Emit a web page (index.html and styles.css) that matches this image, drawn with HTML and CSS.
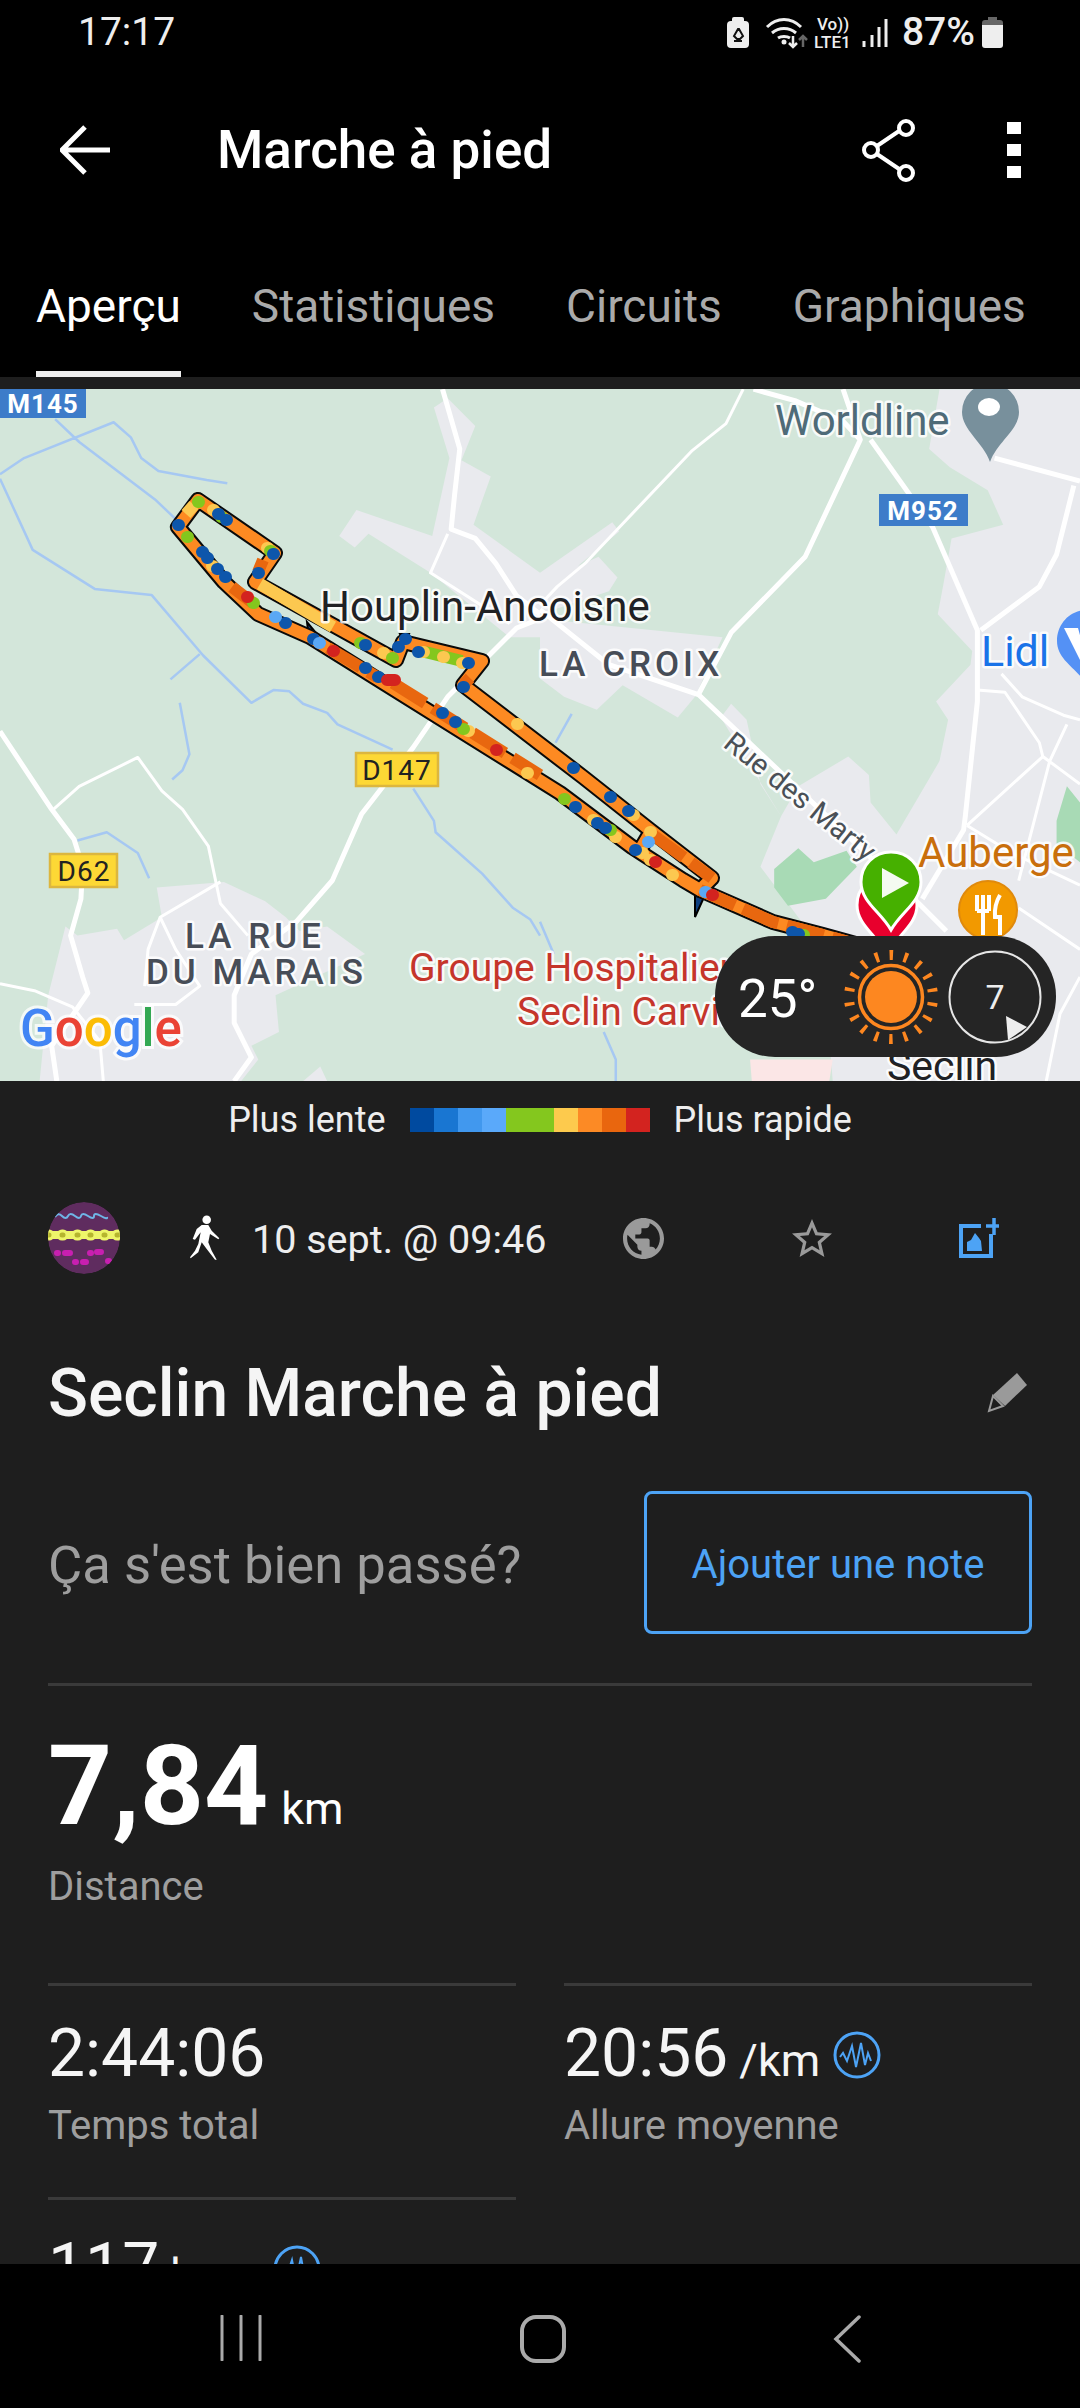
FILE: index.html
```html
<!DOCTYPE html>
<html lang="fr">
<head>
    <meta charset="UTF-8">
    <meta name="viewport" content="width=device-width, initial-scale=1.0">
    <title>Marche à pied</title>
    <link rel="stylesheet" href="styles.css">
</head>
<body>
<div class="screen">

    <div class="status-bar">
        <span class="clock">17:17</span>
        <div class="status-right">
            <svg class="status-icons" viewBox="726 14 166 36">
                <rect x="728" y="21" width="22" height="27" rx="4" fill="#eee"/>
                <rect x="733" y="17" width="12" height="6" rx="2" fill="#eee"/>
                <path d="M739 29l-4 7 3 3h3l3-3-4-7zM735 41h8" fill="none" stroke="#111" stroke-width="2"/>
                <path d="M768 27c10-10 24-10 34 0M773 33c7-6 17-6 24 0M779 38c3-2 9-2 12 0" fill="none" stroke="#eee" stroke-width="3"/>
                <circle cx="785" cy="42" r="2.5" fill="#eee"/>
                <path d="M794 36v11M790 43l4 4 4-4" fill="none" stroke="#eee" stroke-width="2.5"/>
                <path d="M804 47V37M800 40l4-4 4 4" fill="none" stroke="#666" stroke-width="2.5"/>
                <text class="tiny" x="818" y="30">Vo))</text>
                <text class="tiny" x="815" y="48">LTE1</text>
                <path d="M865 41v6M873 35v12M880 27v20M887 19v28" fill="none" stroke="#eee" stroke-width="3"/>
            </svg>
            <span class="percent">87%</span>
            <svg class="battery" viewBox="0 0 21 31">
                <path d="M6 0h9v3h3q3 0 3 3v2H0V6q0-3 3-3h3z" fill="#666"/>
                <path d="M0 8h21v20q0 3-3 3H3q-3 0-3-3z" fill="#eee"/>
            </svg>
        </div>
    </div>

    <div class="app-bar">
        <svg class="back" viewBox="60 125 52 50"><path d="M110 150H64M85 127l-23 23 23 23" fill="none" stroke="#fff" stroke-width="5"/></svg>
        <span class="app-title">Marche à pied</span>
        <svg class="share" viewBox="860 118 56 63">
            <path d="M871 149l34-23M871 149l34 23" stroke="#fff" stroke-width="4"/>
            <circle cx="906" cy="127" r="7" fill="#000" stroke="#fff" stroke-width="4"/>
            <circle cx="871" cy="149" r="7" fill="#000" stroke="#fff" stroke-width="4"/>
            <circle cx="906" cy="172" r="7" fill="#000" stroke="#fff" stroke-width="4"/>
        </svg>
        <div class="more"><i></i><i></i><i></i></div>
    </div>

    <div class="tabs">
        <span class="tab active">Aperçu</span>
        <span class="tab">Statistiques</span>
        <span class="tab">Circuits</span>
        <span class="tab">Graphiques</span>
    </div>

    <div class="map">
        <svg class="map-art" viewBox="0 389 1080 692">
            <!-- left half, points read off the zoomed crop -->
            <g transform="translate(0 380) scale(.34439 .45918)">
                <path class="town" d="M985 340L1035 283 1255 340 1305 170 1260 60 1300 40 1380 100 1340 175 1425 210 1375 315 1568 420V560H1480L1250 420 1070 335 1030 365z"/>
                <path class="town" d="M455 1105L650 1093 770 1135 830 1170 870 1200 950 1190 1060 1250 800 1340 810 1420 730 1450 750 1480 700 1527H115L140 1340 190 1190 225 1210 340 1195 360 1220 470 1170z"/>
                <path class="town" d="M880 1527L930 1495 950 1527z"/>
                <path class="road" d="M0 765L150 935 215 1000 240 1060 235 1130 205 1210 240 1300 255 1335 205 1390 150 1450 165 1527"/>
                <path class="road" d="M1568 520L1500 540 1300 690 1200 800 1050 945 965 1090 860 1180 730 1250 680 1340 680 1400 730 1475 680 1527"/>
                <path class="road" d="M1285 20L1335 150 1320 250 1310 325 1380 345 1440 400 1500 470 1568 510"/>
                <path class="road thin" d="M155 935L230 885 400 822 470 895 530 935 605 1015 640 1140 720 1210"/>
                <path class="road thin" d="M640 1093L465 1170 510 1240 580 1320 510 1360 390 1360M1300 335L1250 420 1480 530M0 1315L100 1330 210 1365 290 1440 300 1527M465 1170L430 1240 420 1320"/>
                <path class="water" d="M160 85L230 135 450 260 520 310M0 205L70 170 330 92 380 125 410 170 460 198 600 218 660 225M0 215L95 370 275 455 440 468 590 600 730 703 795 675 840 678 880 705 950 725 980 750 1140 805M495 652L580 597M522 703L550 815 530 850 500 870M225 1003L310 985 400 1030 433 1085M1200 890L1260 960 1265 985 1400 1075 1490 1150 1540 1175 1568 1210"/>
            </g>
            <!-- right half -->
            <g transform="translate(540 380) scale(.34439 .45918)">
                <path class="town" d="M1160 20L1130 150 1190 190 1300 240 1345 315 1195 345 1170 450 1155 510 1255 590 1250 620 1150 700 1185 740 1160 830 1035 990 960 920 955 860 895 820 750 885 700 950 640 880 600 740 555 705 525 735 700 950 640 1060 820 1240 850 1527H1568V20z"/>
                <path class="town" d="M0 510L200 460 225 430 170 385 110 405 230 330 210 310 0 420zM0 520L530 560 450 690 400 735 240 665 165 718 70 690 0 650z"/>
                <path class="hospital" d="M610 1480H850L840 1527H615z"/>
                <path class="park" d="M680 1065L750 1020 795 1050 890 1025 920 1060 830 1130 720 1145 680 1105zM1500 960L1530 885 1568 920V1050L1500 1010z"/>
                <path class="road thin" d="M590 20L540 95 440 155 130 400 50 450 0 490"/>
                <path class="road" d="M620 20L740 45 880 90 930 130 770 385 555 550 460 685M880 20L930 130"/>
                <path class="road" d="M960 130L1140 320 1270 545 1270 700 1235 950 1230 980 1110 1130"/>
                <path class="road" d="M1320 170L1568 220M1550 230L1500 380 1450 450 1280 545"/>
                <path class="road" d="M0 500L200 620 460 685 960 1040 1100 1140 1180 1200"/>
                <path class="road thin" d="M1340 640L1400 690 1520 730 1568 740M1270 675L1350 680 1450 790 1460 820 1240 970M1530 750L1480 830 1390 1090M1460 820L1568 880M1240 970L1370 1030 1568 1100M1390 1150L1568 1240M1470 1527L1510 1380 1568 1300"/>
                <path class="water" d="M92 727L45 790M0 1180L40 1250M185 1420L220 1480 220 1527"/>
            </g>

            <!-- route, in page coordinates -->
            <path class="arrow" d="M307 622l2 16 12 1zM400 634h9l-4 11zM695 895v22l10-22z"/>
            <path class="route-edge" d="M178 527L198 500 275 553 255 582 396 660 403 642 482 661 463 685 583 777 650 830 712 878 700 890 683 880 632 847 560 793 310 637 258 614 224 582zM650 833L640 850M700 890L773 922 823 935 870 948"/>
            <path class="route-line" d="M178 527L198 500 275 553 255 582 396 660 403 642 482 661 463 685 583 777 650 830 712 878 700 890 683 880 632 847 560 793 310 637 258 614 224 582z"/>
            <path class="route-line" d="M650 833L640 850M700 890L773 922 823 935 870 948"/>
            <path class="route-dark" d="M263 560L258 572M232 587L253 603M328 648L377 677M393 683L540 775M470 678L463 685M653 835L712 878M700 890L773 922 823 935 870 948"/>
            <path class="route-yellow" d="M260 584L333 627M186 514L194 505"/>
            <path class="route-green" d="M425 652L462 661"/>
            <path class="dot yellow" d="M213 510h1M267 548h1M383 653h1M423 652h1M443 657h1M462 663h1M517 724h1M468 731h1M527 773h1M593 820h1M615 837h1M633 815h1M650 832h1M642 853h1M650 860h1M672 875h1M212 566h1"/>
            <path class="dot green" d="M198 502h1M221 517h1M270 551h1M187 537h1M253 603h1M360 643h1M392 658h1M463 729h1M564 799h1M610 830h1M803 935h1"/>
            <path class="dot blue" d="M178 525h1M218 514h1M226 520h1M273 554h1M258 573h1M202 552h1M207 558h1M217 569h1M225 577h1M285 623h1M313 639h1M365 645h1M418 652h1M398 647h1M405 639h1M365 668h1M378 677h1M442 713h1M455 722h1M468 663h1M463 687h1M573 768h1M610 797h1M628 811h1M575 807h1M597 823h1M605 828h1M635 850h1M792 932h1M798 934h1"/>
            <path class="dot sky" d="M275 617h1M319 643h1M648 842h1M705 892h1"/>
            <path class="dot red" d="M247 597h1M333 651h1M387 680h8M496 750h1M655 862h1M712 895h1"/>

            <!-- road shields -->
            <rect class="shield-blue" x="0" y="389" width="86" height="29"/>
            <text class="shield-text light" x="43" y="413">M145</text>
            <rect class="shield-blue" x="879" y="494" width="89" height="32"/>
            <text class="shield-text light" x="923" y="520">M952</text>
            <rect class="shield-yellow" x="356" y="753" width="82" height="33"/>
            <text class="shield-text" x="397" y="780">D147</text>
            <rect class="shield-yellow" x="50" y="854" width="67" height="33"/>
            <text class="shield-text" x="84" y="881">D62</text>

            <!-- labels -->
            <text class="label place" x="320" y="621">Houplin-Ancoisne</text>
            <text class="label district" x="539" y="676">LA CROIX</text>
            <text class="label district" x="185" y="948">LA RUE</text>
            <text class="label district" x="146" y="984">DU MARAIS</text>
            <text class="label health" x="409" y="981">Groupe Hospitalier</text>
            <text class="label health" x="517" y="1025">Seclin Carvin</text>
            <text class="label poi" x="775" y="435">Worldline</text>
            <text class="label shop" x="981" y="666">Lidl</text>
            <text class="label food" x="918" y="867">Auberge</text>
            <text class="label town-name" x="887" y="1080">Seclin</text>
            <text class="label street" transform="translate(722 746) rotate(39)">Rue des Marty</text>

            <path d="M962 412a28.500 28.500 0 0 1 57 0c0 18-22 30-29 50-7-20-28-32-28-50z" fill="#78909c"/>
            <ellipse cx="989" cy="407" rx="11" ry="9" fill="#fff"/>
            <path d="M1087 610c-17 0-30 14-30 31 0 20 22 28 30 45 8-17 30-25 30-45 0-17-13-31-30-31z" fill="#5491f5"/>
            <path d="M1064 628h14l5 18v16h8v4h-8" fill="#fff"/>

            <circle cx="988" cy="910" r="29" fill="#f29900" stroke="#e08a0c" stroke-width="2"/>
            <path d="M977 895v16M983 895v16M989 895v16M977 911h12M983 911v24M1000 895q-6 10-5 22h5v18" fill="none" stroke="#fff" stroke-width="4"/>

            <path class="pin pin-red" d="M857 905c0-17 13-30 30-30s30 13 30 30c0 20-20 30-30 50-10-20-30-30-30-50z"/>
            <path class="pin pin-green" d="M861 882c0-17 13-30 30-30s30 13 30 30c0 20-20 30-30 48-10-18-30-28-30-48z"/>
            <path d="M882 868l27 15-27 15z" fill="#f4faf0"/>

            <!-- google mark, letter by letter -->
            <text class="google" x="20" y="1046"><tspan fill="#4285f4">G</tspan><tspan fill="#ea4335">o</tspan><tspan fill="#fbbc05">o</tspan><tspan fill="#4285f4">g</tspan><tspan fill="#34a853">l</tspan><tspan fill="#ea4335">e</tspan></text>
        </svg>

        <div class="weather">
            <span class="temp">25°</span>
            <svg class="sun" viewBox="0 0 96 96">
                <circle class="sun-rays" cx="48" cy="48" r="42"/>
                <circle class="sun-ring" cx="48" cy="48" r="31.500"/>
                <circle class="sun-core" cx="48" cy="48" r="26"/>
            </svg>
            <svg class="wind" viewBox="0 0 94 94">
                <circle cx="47" cy="47" r="45.500" fill="none" stroke="#e6e6e6" stroke-width="2"/>
                <path d="M58 66l21 11-19 13z" fill="#eee"/>
                <text class="wind-speed" x="47" y="59">7</text>
            </svg>
        </div>
    </div>

    <div class="content">
        <div class="legend">
            <span>Plus lente</span>
            <div class="legend-bar">
                <i class="c1"></i><i class="c2"></i><i class="c3"></i><i class="c4"></i><i class="c5"></i><i class="c5"></i><i class="c6"></i><i class="c7"></i><i class="c8"></i><i class="c9"></i>
            </div>
            <span>Plus rapide</span>
        </div>

        <div class="padded">
            <div class="meta">
                <svg class="avatar" viewBox="48 1202 72 72">
                    <clipPath id="egg"><circle cx="84" cy="1238" r="36"/></clipPath>
                    <g clip-path="url(#egg)">
                        <circle cx="84" cy="1238" r="36" fill="#5f2c5f"/>
                        <path d="M55 1217q3-5 7-1t6 0 7 0 6 0 7 0 6 0 7 0 6 1" fill="none" stroke="#6fb5e6" stroke-width="2"/>
                        <rect x="48" y="1231" width="72" height="8" fill="#eef56a"/>
                        <path d="M48 1235h1M62 1235h1M77 1235h1M90 1235h1M104 1235h1M117 1235h1" stroke="#eef56a" stroke-width="11" stroke-linecap="round"/>
                        <path d="M48 1235h1M62 1235h1M77 1235h1M90 1235h1M104 1235h1M117 1235h1" stroke="#b5b52e" stroke-width="5" stroke-linecap="round"/>
                        <path d="M57 1253h1M65 1253h5M90 1253h1M97 1252h4M75 1262h1M83 1262h3M108 1261h1" stroke="#c81fb0" stroke-width="6" stroke-linecap="round"/>
                    </g>
                </svg>
                <svg class="walker" viewBox="188 1216 32 46">
                    <circle cx="206.700" cy="1220.700" r="4.300" fill="#fff"/>
                    <path d="M201.700 1226H208.300L211.700 1231.700 219.300 1239.300 218.300 1240.300 210 1235 208.300 1243.300 211.700 1251.700 216.700 1260.700H215L206.700 1250 201.700 1243.300 198.300 1253.300 190.700 1259.300 190 1258.300 195 1251.700 198.300 1245 200.700 1233.300 195 1240.700 192.700 1240 196.700 1230z" fill="#fff"/>
                </svg>
                <span class="meta-date">10 sept. @ 09:46</span>
                <svg class="globe" viewBox="2 2 20 20"><path d="M12 2C6.480 2 2 6.480 2 12s4.480 10 10 10 10-4.480 10-10S17.520 2 12 2zm-1 17.930c-3.950-.49-7-3.850-7-7.930 0-.62.080-1.210.21-1.790L9 15v1c0 1.100.9 2 2 2v1.930zm6.900-2.540c-.26-.81-1-1.390-1.900-1.390h-1v-3c0-.55-.45-1-1-1H8v-2h2c.55 0 1-.45 1-1V7h2c1.100 0 2-.9 2-2v-.41c2.930 1.190 5 4.060 5 7.410 0 2.080-.8 3.970-2.100 5.390z"/></svg>
                <svg class="star" viewBox="2 2 20 19"><path d="M22 9.240l-7.190-.62L12 2 9.190 8.630 2 9.240l5.460 4.730L5.820 21 12 17.270 18.180 21l-1.630-7.030L22 9.240zM12 15.400l-3.760 2.270 1-4.280-3.320-2.880 4.380-.38L12 6.100l1.710 4.040 4.380.38-3.320 2.880 1 4.280L12 15.400z"/></svg>
                <svg class="add-photo" viewBox="960 1214 44 44">
                    <path d="M984 1224h-20v30h30v-22" fill="none" stroke="#4da3f5" stroke-width="4"/>
                    <path d="M997 1216v17M989 1224h13" fill="none" stroke="#4da3f5" stroke-width="3.500"/>
                    <path d="M970 1249v-9l4-2 4-7 4 5 2 3 1 10z" fill="#4da3f5"/>
                </svg>
            </div>

            <div class="title-row">
                <h1>Seclin Marche à pied</h1>
                <svg class="pencil" viewBox="986 1372 44 44">
                    <path d="M1017 1375l10 12-22 21-12-11z" fill="#9a9a9a"/>
                    <path d="M993 1398l10 10-14 5z" fill="none" stroke="#9a9a9a" stroke-width="2"/>
                </svg>
            </div>

            <div class="note-row">
                <span class="note-prompt">Ça s'est bien passé?</span>
                <button class="note-btn">Ajouter une note</button>
            </div>

            <div class="distance">
                <div class="big"><b>7,84</b> <span>km</span></div>
                <div class="stat-label">Distance</div>
            </div>

            <div class="stats">
                <div class="stat">
                    <div class="stat-value">2:44:06</div>
                    <div class="stat-label">Temps total</div>
                </div>
                <div class="stat">
                    <div class="stat-value">20:56 <small>/km</small>
                        <svg class="pulse" viewBox="0 0 48 48"><use href="#pulse-mark"/></svg>
                    </div>
                    <div class="stat-label">Allure moyenne</div>
                </div>
                <div class="stat">
                    <div class="stat-value">117 <small>bpm</small>
                        <svg class="pulse" viewBox="0 0 48 48"><use href="#pulse-mark"/></svg>
                    </div>
                    <div class="stat-label">Fréquence cardiaque</div>
                </div>
            </div>
        </div>
    </div>

    <div class="nav-bar">
        <svg class="nav-recent" viewBox="0 0 42 46"><path d="M2 1v44M21 1v44M40 1v44" stroke="#aaa" stroke-width="3" stroke-linecap="round"/></svg>
        <svg class="nav-home" viewBox="0 0 46 48"><rect x="2" y="2" width="42" height="44" rx="14" fill="none" stroke="#aaa" stroke-width="4"/></svg>
        <svg class="nav-back" viewBox="0 0 28 48"><path d="M26 2L3 24l23 22" fill="none" stroke="#aaa" stroke-width="3.500" stroke-linecap="round"/></svg>
    </div>

    <svg class="defs" width="0" height="0">
        <symbol id="pulse-mark" viewBox="0 0 48 48">
            <circle cx="24" cy="24" r="22" fill="none" stroke="#4da3f5" stroke-width="3"/>
            <path d="M7 26l3-4 4 8 5-15 4 21 5-24 4 22 3-12 3 8" fill="none" stroke="#4da3f5" stroke-width="2"/>
        </symbol>
    </svg>
</div>
</body>
</html>
```

FILE: styles.css
```css
* {
    margin: 0;
    padding: 0;
    box-sizing: border-box;
}

body {
    background-color: #1e1e1e;
    font-family: Roboto, "Liberation Sans", sans-serif;
    color: #fff;
}

.screen {
    width: 1080px;
    height: 2408px;
    display: flex;
    flex-direction: column;
    overflow: hidden;
    background-color: #1e1e1e;
}

/* status bar */
.status-bar {
    height: 64px;
    flex: none;
    display: flex;
    align-items: center;
    padding: 0 77px 0 78px;
    background-color: #000;
    color: #eee;
}

.clock {
    font-size: 39px;
}

.status-right {
    margin-left: auto;
    display: flex;
    align-items: center;
}

.status-icons {
    width: 166px;
    height: 36px;
}

.tiny {
    font-size: 17px;
    font-weight: 500;
    fill: #eee;
}

.percent {
    font-size: 39px;
    font-weight: 500;
    margin-left: 11px;
}

.battery {
    width: 21px;
    height: 31px;
    margin-left: 7px;
}

/* app bar */
.app-bar {
    height: 172px;
    flex: none;
    display: flex;
    align-items: center;
    background-color: #000;
    padding-left: 60px;
}

.back {
    width: 52px;
    height: 50px;
}

.app-title {
    font-size: 53px;
    font-weight: 500;
    margin-left: 105px;
}

.share {
    width: 56px;
    height: 63px;
    margin-left: auto;
}

.more {
    width: 14px;
    margin: 0 59px 0 91px;
    display: flex;
    flex-direction: column;
    gap: 10px;
}

.more i {
    display: block;
    height: 12px;
    background-color: #fff;
}

/* tabs */
.tabs {
    height: 141px;
    flex: none;
    display: flex;
    gap: 71px;
    padding-left: 36px;
    background-color: #000;
}

.tab {
    height: 141px;
    padding-top: 43px;
    font-size: 46px;
    color: #aaa;
}

.tab.active {
    color: #fff;
    border-bottom: 6px solid #eee;
}

/* map */
.map {
    position: relative;
    height: 692px;
    flex: none;
    margin-top: 12px;
    background-color: #d3e6da;
    overflow: hidden;
}

.map-art {
    display: block;
    width: 1080px;
    height: 692px;
}

.town {
    fill: #e9eaee;
}

.hospital {
    fill: #fbe6e6;
}

.park {
    fill: #a8dab5;
}

.road,
.water {
    fill: none;
    vector-effect: non-scaling-stroke;
    stroke-linejoin: round;
}

.road {
    stroke: #fff;
    stroke-width: 5px;
}

.road.thin {
    stroke-width: 3px;
}

.water {
    stroke: #a6c8f2;
    stroke-width: 2.5px;
}

.route-edge,
.route-line,
.route-dark,
.route-yellow,
.route-green {
    fill: none;
    stroke-linejoin: round;
    stroke-width: 12px;
}

.route-edge {
    stroke: #0a0a0a;
    stroke-width: 16px;
    stroke-linecap: round;
}

.route-line {
    stroke: #fd8a22;
}

.route-dark {
    stroke: #e8670f;
    stroke-dasharray: 38 9;
}

.route-yellow {
    stroke: #fcc850;
}

.route-green {
    stroke: #84c71e;
}

.arrow {
    fill: #0d3f80;
    stroke: #000;
    stroke-width: 2px;
}

.dot {
    fill: none;
    stroke-width: 12px;
    stroke-linecap: round;
}

.dot.yellow { stroke: #fcc850; }
.dot.green { stroke: #84c71e; }
.dot.blue { stroke: #0d56ab; }
.dot.sky { stroke: #5aa8f5; }
.dot.red { stroke: #d3231f; }

.shield-blue {
    fill: #3d7cc9;
}

.shield-yellow {
    fill: #fdd835;
    stroke: #dcb63f;
    stroke-width: 2.500px;
}

.shield-text {
    font-size: 28px;
    letter-spacing: 1px;
    text-anchor: middle;
    fill: #222;
}

.shield-text.light {
    fill: #fff;
    font-weight: 700;
    font-size: 26px;
}

.label {
    paint-order: stroke;
    stroke: rgba(255, 255, 255, 0.85);
    stroke-width: 5px;
    stroke-linejoin: round;
}

.place {
    font-size: 42px;
    fill: #202124;
}

.town-name {
    font-size: 41px;
    fill: #202124;
}

.district {
    font-size: 35px;
    font-weight: 500;
    letter-spacing: 4px;
    fill: #474d57;
}

.health {
    font-size: 39px;
    fill: #c5352b;
}

.poi {
    font-size: 42px;
    fill: #4f6b78;
}

.shop {
    font-size: 43px;
    fill: #1a73e8;
}

.food {
    font-size: 42px;
    fill: #c96f0c;
}

.street {
    font-size: 29px;
    fill: #4a5056;
}

.pin {
    stroke: #fff;
    stroke-width: 3px;
}

.pin-red { fill: #e8002d; }
.pin-green { fill: #46b000; }

.google {
    font-size: 51px;
    font-weight: 500;
    paint-order: stroke;
    stroke: rgba(255, 255, 255, 0.75);
    stroke-width: 6px;
}

.weather {
    position: absolute;
    right: 24px;
    bottom: 24px;
    width: 341px;
    height: 121px;
    border-radius: 60px;
    background-color: #252525;
    display: flex;
    align-items: center;
    padding-left: 23px;
}

.temp {
    font-size: 53px;
    width: 105px;
    padding-top: 4px;
}

.sun {
    width: 96px;
    height: 96px;
}

.sun-rays {
    fill: none;
    stroke: #fd8720;
    stroke-width: 10px;
    stroke-dasharray: 3.500 11.160;
    stroke-dashoffset: -5.580;
}

.sun-ring {
    fill: none;
    stroke: #fd8720;
    stroke-width: 3.500px;
}

.sun-core {
    fill: #fd8720;
}

.wind {
    width: 94px;
    height: 94px;
    margin-left: 9px;
}

.wind-speed {
    font-size: 34px;
    text-anchor: middle;
    fill: #eee;
}

/* content */
.content {
    flex: 1;
    overflow: hidden;
}

.legend {
    height: 78px;
    display: flex;
    align-items: center;
    justify-content: center;
    gap: 24px;
    font-size: 36px;
    color: #eee;
}

.legend-bar {
    display: flex;
}

.legend-bar i {
    display: block;
    width: 24px;
    height: 24px;
}

.c1 { background-color: #004a9f; }
.c2 { background-color: #1976d2; }
.c3 { background-color: #4198ee; }
.c4 { background-color: #5aa9fa; }
.c5 { background-color: #84c71e; }
.c6 { background-color: #fdca4d; }
.c7 { background-color: #fc8a25; }
.c8 { background-color: #e9660e; }
.c9 { background-color: #d3231f; }

.padded {
    padding: 0 48px;
}

.meta {
    height: 72px;
    margin-top: 43px;
    display: flex;
    align-items: center;
}

.avatar {
    width: 72px;
    height: 72px;
}

.walker {
    width: 32px;
    height: 46px;
    margin-left: 68px;
}

.meta-date {
    font-size: 39.500px;
    color: #eee;
    margin-left: 32px;
    padding-top: 2px;
    width: 295px;
    white-space: nowrap;
}

.globe {
    width: 41px;
    height: 41px;
    margin-left: 76px;
    fill: #9a9a9a;
}

.star {
    width: 40px;
    height: 38px;
    margin-left: 128px;
    fill: #9a9a9a;
}

.add-photo {
    width: 44px;
    height: 44px;
    margin-left: auto;
    margin-right: 31px;
}

.title-row {
    height: 80px;
    margin-top: 78px;
    display: flex;
    align-items: center;
    justify-content: space-between;
}

h1 {
    font-size: 66px;
    font-weight: 500;
    color: #f5f5f5;
    padding-top: 2px;
}

.pencil {
    width: 44px;
    height: 44px;
    margin-right: 2px;
}

.note-row {
    height: 143px;
    margin-top: 59px;
    display: flex;
    align-items: center;
    justify-content: space-between;
}

.note-prompt {
    font-size: 52.600px;
    color: #9e9e9e;
    padding-top: 5px;
}

.note-btn {
    width: 388px;
    height: 143px;
    padding-top: 3px;
    background: none;
    border: 3px solid #4da3f5;
    border-radius: 8px;
    color: #4da3f5;
    font-family: inherit;
    font-size: 40px;
}

.distance {
    margin-top: 49px;
    height: 300px;
    border-top: 3px solid #3a3a3a;
    padding-top: 44px;
}

.big b {
    font-size: 112px;
    font-weight: 700;
    line-height: 112px;
}

.big span {
    font-size: 45px;
    margin-left: 9px;
}

.stat-label {
    font-size: 40px;
    color: #9e9e9e;
}

.distance .stat-label {
    margin-top: 21px;
}

.stats {
    display: grid;
    grid-template-columns: 468px 468px;
    column-gap: 48px;
    grid-auto-rows: 214px;
}

.stat {
    border-top: 3px solid #3a3a3a;
    padding-top: 29px;
}

.stat-value {
    display: flex;
    align-items: baseline;
    gap: 11px;
    font-size: 66px;
    height: 80px;
    color: #f5f5f5;
}

.stat-value small {
    font-size: 45px;
}

.pulse {
    width: 48px;
    height: 48px;
    align-self: center;
    margin-left: 2px;
}

.stat .stat-label {
    margin-top: 7px;
}

/* nav bar */
.nav-bar {
    height: 144px;
    flex: none;
    display: flex;
    padding: 51px 0 0 220px;
    background-color: #000;
}

.nav-recent {
    width: 42px;
    height: 46px;
}

.nav-home {
    width: 46px;
    height: 48px;
    margin-left: 258px;
}

.nav-back {
    width: 28px;
    height: 48px;
    margin-left: 267px;
}

.defs {
    position: absolute;
}
```
